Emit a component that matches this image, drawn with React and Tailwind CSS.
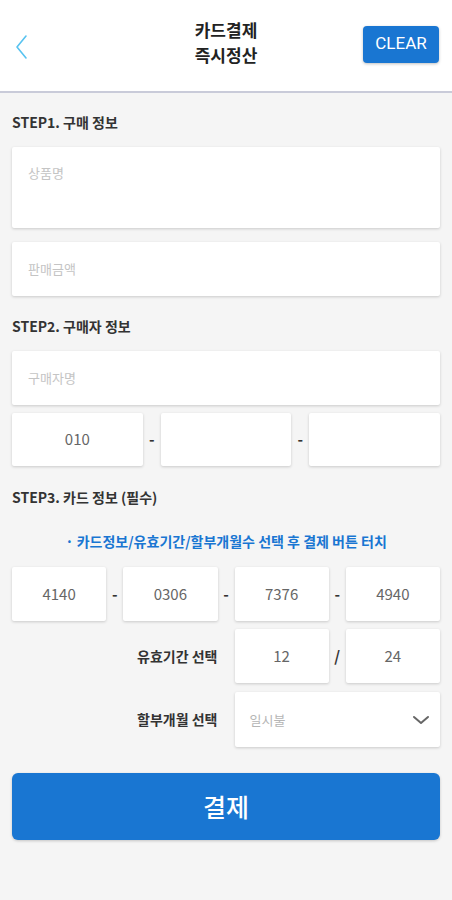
import React from "react";

const font = { fontFamily: '"Noto Sans CJK KR", "Noto Sans", sans-serif' };

function Box({ children, className = "" }) {
  return (
    <div
      className={`bg-white rounded-[2px] shadow-[0_1px_3px_rgba(0,0,0,0.18)] flex items-center ${className}`}
    >
      {children}
    </div>
  );
}

function Sep({ ch = "-" }) {
  return (
    <div className="flex items-center justify-center text-[15px] font-bold text-[#333]">
      {ch}
    </div>
  );
}

export default function App() {
  return (
    <div className="w-[452px] h-[900px] bg-[#f5f5f5]" style={font}>
      <header className="h-[93px] bg-white border-b-2 border-[#c9cbd9] flex items-center justify-between px-3 relative">
        <svg width="16" height="26" viewBox="0 0 16 26" className="ml-[1px] mt-[2px]">
          <path d="M13 2 L4 13 L13 24" fill="none" stroke="#58c3f0" strokeWidth="1.6" strokeLinecap="round" strokeLinejoin="round" />
        </svg>
        <div className="absolute left-0 right-0 top-[17px] text-center text-[17px] font-bold leading-[25px] text-[#222] pointer-events-none">
          <div>카드결제</div>
          <div>즉시정산</div>
        </div>
        <button
          className="w-[76px] h-[37px] mt-[-3px] mr-[1px] rounded-[4px] bg-[#1976d2] text-white text-[17px] shadow-[0_1px_3px_rgba(0,0,0,0.25)]"
          style={{ fontFamily: 'Roboto, "Noto Sans", sans-serif' }}
        >
          CLEAR
        </button>
      </header>

      <main className="px-3 pt-[19px]">
        <div className="text-[14px] font-bold leading-[20px] text-[#333]">STEP1. 구매 정보</div>
        <Box className="mt-[15px] h-[81px] !items-start pt-[16px] px-4">
          <span className="text-[13px] text-[#c4c4c4]">상품명</span>
        </Box>
        <Box className="mt-[14px] h-[54px] px-4">
          <span className="text-[13px] text-[#c4c4c4]">판매금액</span>
        </Box>

        <div className="mt-[20px] text-[14px] font-bold leading-[20px] text-[#333]">STEP2. 구매자 정보</div>
        <Box className="mt-[15px] h-[54px] px-4">
          <span className="text-[13px] text-[#c4c4c4]">구매자명</span>
        </Box>
        <div className="mt-[8px] h-[53px] grid grid-cols-[1fr_18px_1fr_18px_1fr]">
          <Box className="justify-center">
            <span className="text-[15px] text-[#666]">010</span>
          </Box>
          <Sep />
          <Box />
          <Sep />
          <Box />
        </div>

        <div className="mt-[21px] text-[14px] font-bold leading-[20px] text-[#333]">STEP3. 카드 정보 (필수)</div>
        <div className="mt-[24px] text-center text-[14px] font-bold leading-[20px] text-[#1976d2]">
          · 카드정보/유효기간/할부개월수 선택 후 결제 버튼 터치
        </div>

        <div className="mt-[16px] h-[54px] grid grid-cols-[1fr_17px_1fr_17px_1fr_17px_1fr]">
          <Box className="justify-center"><span className="text-[15px] text-[#666]">4140</span></Box>
          <Sep />
          <Box className="justify-center"><span className="text-[15px] text-[#666]">0306</span></Box>
          <Sep />
          <Box className="justify-center"><span className="text-[15px] text-[#666]">7376</span></Box>
          <Sep />
          <Box className="justify-center"><span className="text-[15px] text-[#666]">4940</span></Box>
        </div>

        <div className="mt-[8px] h-[54px] grid grid-cols-[1fr_17px_1fr_17px_1fr_17px_1fr]">
          <div className="col-span-3 flex items-center justify-end text-[14px] font-bold text-[#333]">
            유효기간 선택
          </div>
          <div />
          <Box className="justify-center"><span className="text-[15px] text-[#666]">12</span></Box>
          <Sep ch="/" />
          <Box className="justify-center"><span className="text-[15px] text-[#666]">24</span></Box>
        </div>

        <div className="mt-[9px] h-[55px] grid grid-cols-[1fr_17px_1fr_17px_1fr_17px_1fr]">
          <div className="col-span-3 flex items-center justify-end text-[14px] font-bold text-[#333]">
            할부개월 선택
          </div>
          <div />
          <Box className="col-span-3 justify-between pl-[15px] pr-[10px]">
            <span className="text-[13px] text-[#b5b5b5]">일시불</span>
            <svg width="18" height="12" viewBox="0 0 18 12">
              <path d="M2 3 L9 9 L16 3" fill="none" stroke="#666" strokeWidth="2" strokeLinecap="round" strokeLinejoin="round" />
            </svg>
          </Box>
        </div>

        <button className="mt-[26px] w-full h-[67px] rounded-[6px] bg-[#1976d2] text-white text-[25px] font-medium shadow-[0_1px_3px_rgba(0,0,0,0.2)]">
          결제
        </button>
      </main>
    </div>
  );
}
